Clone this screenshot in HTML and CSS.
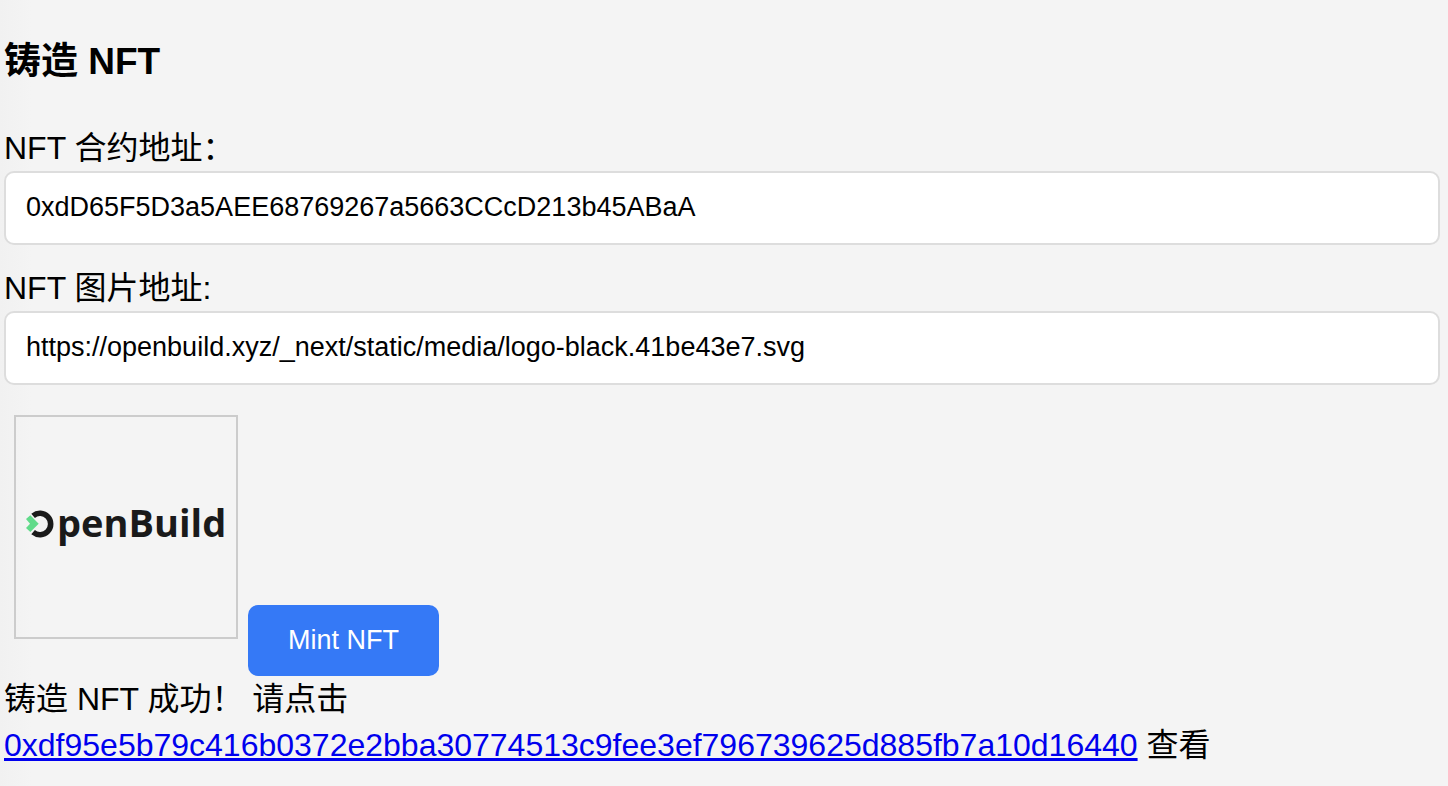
FILE: index.html
```html
<!DOCTYPE html>
<html lang="zh-CN">
<head>
<meta charset="utf-8">
<title>铸造 NFT</title>
<link rel="stylesheet" href="styles.css">
</head>
<body>
<main class="mint">
  <h3 class="mint-title">铸造 NFT</h3>
  <form class="mint-form">
    <label class="field-label" for="contract">NFT 合约地址：</label>
    <input class="field-input" id="contract" type="text" value="0xdD65F5D3a5AEE68769267a5663CCcD213b45ABaA">
    <label class="field-label" for="image">NFT 图片地址:</label>
    <input class="field-input" id="image" type="text" value="https://openbuild.xyz/_next/static/media/logo-black.41be43e7.svg">
    <div class="mint-row">
      <svg class="preview" viewBox="0 0 200 200" role="img" aria-label="OpenBuild">
        <path d="M7.1 88.8A10.7 10.7 0 1 1 7.1 105.2" fill="none" stroke="#1a1a1a" stroke-width="5.6"/>
        <path d="M0 92L4.3 88.3L12.7 96.7L4.3 105L0 101L4 96.7Z" fill="#62db8b"/>
        <text class="preview-name" x="31" y="110">penBuild</text>
      </svg>
      <button class="mint-button" type="button">Mint NFT</button>
    </div>
  </form>
  <p class="result">铸造 NFT 成功！ 请点击<br><a class="result-link" href="#tx">0xdf95e5b79c416b0372e2bba30774513c9fee3ef796739625d885fb7a10d16440</a> 查看</p>
</main>
</body>
</html>
```

FILE: styles.css
```css
body {
  margin: 0;
  background: #f4f4f4 linear-gradient(to right, #f1f1f1, #f4f4f4) no-repeat left / 32px 100%;
  color: #000;
  font-family: "Liberation Sans", "Noto Sans CJK SC", sans-serif;
  font-size: 32px;
  line-height: 46px;
}

.mint {
  padding: 36px 8px 20px 4px;
}

.mint-title {
  margin: 0 0 37px;
  font-size: 37px;
  line-height: 52px;
}

.field-label {
  display: block;
}

.field-input {
  display: block;
  box-sizing: border-box;
  width: 100%;
  height: 74px;
  margin: 0 0 20px;
  padding: 0 20px 2px;
  border: 2px solid #ddd;
  border-radius: 10px;
  background: #fff;
  color: #000;
  font-family: inherit;
  font-size: 27px;
}

.mint-row {
  display: flex;
  align-items: flex-end;
}

.preview {
  width: 200px;
  height: 200px;
  margin: 10px 10px 37px;
  padding: 10px;
  border: 2px solid #ccc;
}

.preview-name {
  fill: #1a1a1a;
  font-family: "Open Sans", sans-serif;
  font-size: 38px;
  font-weight: 700;
}

.mint-button {
  padding: 20px 40px;
  border: 0;
  border-radius: 10px;
  background: #3579f6;
  color: #fff;
  font-family: inherit;
  font-size: 27px;
  line-height: 31px;
}

.result {
  margin: 0;
}

.result-link {
  color: #0000ee;
  text-decoration-thickness: 3px;
}
```
